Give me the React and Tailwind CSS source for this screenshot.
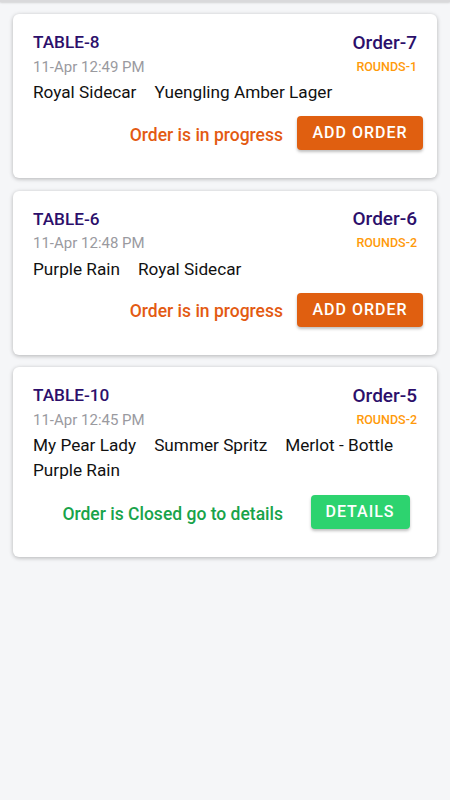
const orders = [
  {
    table: "TABLE-8",
    order: "Order-7",
    time: "11-Apr 12:49 PM",
    rounds: "ROUNDS-1",
    items: ["Royal Sidecar", "Yuengling Amber Lager"],
    closed: false,
  },
  {
    table: "TABLE-6",
    order: "Order-6",
    time: "11-Apr 12:48 PM",
    rounds: "ROUNDS-2",
    items: ["Purple Rain", "Royal Sidecar"],
    closed: false,
  },
  {
    table: "TABLE-10",
    order: "Order-5",
    time: "11-Apr 12:45 PM",
    rounds: "ROUNDS-2",
    items: ["My Pear Lady", "Summer Spritz", "Merlot - Bottle", "Purple Rain"],
    closed: true,
  },
];

function OrderCard({ data }) {
  return (
    <div className="bg-white rounded-md shadow-[0_1px_4px_rgba(0,0,0,0.28)] px-5 pt-4 pb-[28px]">
      {/* Table + order number */}
      <div className="flex items-center justify-between h-[26px]">
        <span className="text-[17.2px] font-medium text-[#2c0f6b]">{data.table}</span>
        <span className="text-[19px] font-medium text-[#2c0f6b]">{data.order}</span>
      </div>
      <div className="flex items-center justify-between h-[22px]">
        <span className="text-[15px] text-[#9a9a9f]">{data.time}</span>
        <span className="text-[12.5px] font-medium text-[#ff9a0a]">{data.rounds}</span>
      </div>
      {/* Items */}
      <div className="flex flex-wrap gap-x-[18px] mt-[2px] text-[17.2px] leading-[25px] text-[#111]">
        {data.items.map((item, i) => (
          <span key={i}>{item}</span>
        ))}
      </div>
      {/* Status + action */}
      <div
        className={
          data.closed
            ? "flex items-center justify-end -mr-4 mt-[12px]"
            : "flex items-center justify-end -mr-4 mt-[11px]"
        }
      >
        {data.closed ? (
          <span className="text-[17.5px] font-medium text-[#18a34a] mr-1 mt-1">
            Order is Closed go to details
          </span>
        ) : (
          <span className="text-[17.5px] font-medium text-[#e35a12] mr-1 mt-1">
            Order is in progress
          </span>
        )}
        <div className="w-[146px] flex justify-center">
          {data.closed ? (
            <button className="h-[34px] w-[99px] rounded-[4px] bg-[#2dd36f] text-white text-[16px] font-medium tracking-[1px] shadow-[0_2px_3px_rgba(0,0,0,0.25)]">
              DETAILS
            </button>
          ) : (
            <button className="h-[34px] w-[126px] rounded-[4px] bg-[#e05f10] text-white text-[16px] font-medium tracking-[1px] shadow-[0_2px_3px_rgba(0,0,0,0.25)]">
              ADD ORDER
            </button>
          )}
        </div>
      </div>
    </div>
  );
}

export default function App() {
  return (
    <div
      className="min-h-[800px] bg-[#f5f6f8]"
      style={{ fontFamily: "Roboto, 'Liberation Sans', sans-serif" }}
    >
      <div className="h-[2px] bg-[#d9d9db] shadow-[0_1px_2px_rgba(0,0,0,0.15)]" />
      <div className="flex flex-col gap-[12.5px] px-[13px] pt-[12px]">
        {orders.map((o) => (
          <OrderCard key={o.order} data={o} />
        ))}
      </div>
    </div>
  );
}
